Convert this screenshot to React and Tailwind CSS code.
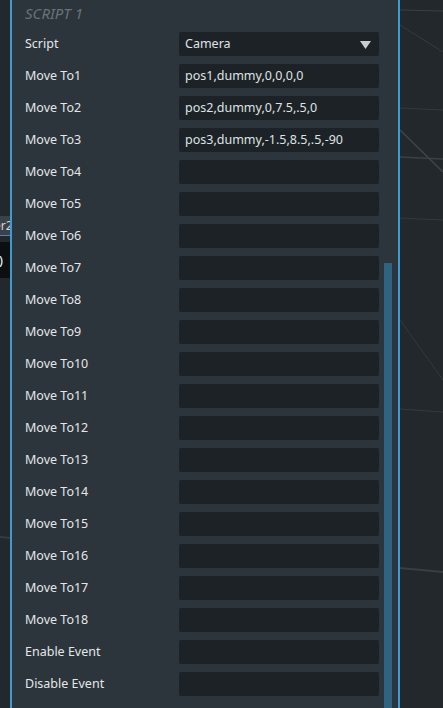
import { useMemo } from 'react'

const rows = [
  ['Move To1', 'pos1,dummy,0,0,0,0'],
  ['Move To2', 'pos2,dummy,0,7.5,.5,0'],
  ['Move To3', 'pos3,dummy,-1.5,8.5,.5,-90'],
  ['Move To4', ''],
  ['Move To5', ''],
  ['Move To6', ''],
  ['Move To7', ''],
  ['Move To8', ''],
  ['Move To9', ''],
  ['Move To10', ''],
  ['Move To11', ''],
  ['Move To12', ''],
  ['Move To13', ''],
  ['Move To14', ''],
  ['Move To15', ''],
  ['Move To16', ''],
  ['Move To17', ''],
  ['Move To18', ''],
  ['Enable Event', ''],
  ['Disable Event', ''],
]

function Field({ label, children }) {
  return (
    <div className="flex items-center h-6">
      <div className="w-[154px] pt-px text-[12.5px] text-[#e4e7e9]">{label}</div>
      <div className="w-[200px] h-6 rounded-[2px] bg-[#1d2226] flex items-center px-[6px] pt-px text-[12.5px] text-[#dfe2e4]">
        {children}
      </div>
    </div>
  )
}

export default function App() {
  const fields = useMemo(() => rows, [])

  return (
    <div
      className="relative w-[443px] h-[708px] overflow-hidden bg-[#23282c] flex"
      style={{ fontFamily: '"Noto Sans", "Open Sans", sans-serif' }}
    >
      {/* backdrop scene lines */}
      <svg className="absolute inset-0" width="443" height="708">
        <line x1="400" y1="10" x2="443" y2="11" stroke="#3a4045" strokeWidth="1" />
        <line x1="400" y1="25" x2="443" y2="52" stroke="#363c41" strokeWidth="1" />
        <line x1="400" y1="108" x2="443" y2="110" stroke="#343a3f" strokeWidth="1" />
        <line x1="400" y1="130" x2="443" y2="172" stroke="#3f454a" strokeWidth="1.5" />
        <line x1="400" y1="157" x2="443" y2="159" stroke="#3b4146" strokeWidth="1.5" />
        <line x1="400" y1="218" x2="443" y2="220" stroke="#33393e" strokeWidth="1" />
        <line x1="400" y1="320" x2="443" y2="380" stroke="#33393e" strokeWidth="1" />
        <line x1="400" y1="409" x2="443" y2="412" stroke="#353b40" strokeWidth="1" />
        <line x1="400" y1="568" x2="443" y2="572" stroke="#383e43" strokeWidth="2" />
        <line x1="0" y1="537" x2="10" y2="538" stroke="#353b40" strokeWidth="2" />
      </svg>

      {/* left sliver of the scene behind the panel */}
      <div className="relative w-[10px] shrink-0 flex flex-col">
        <div className="h-[216px]" />
        <div className="h-[20px] bg-[#3a4248] border-b border-[#5a7fa8] text-[12px] leading-[20px] text-[#d6d9db] overflow-hidden whitespace-nowrap">
          <span className="-ml-[6px] inline-block">er2</span>
        </div>
        <div className="h-[6px]" />
        <div className="h-[36px] bg-[#0c0e10] text-[13px] leading-[36px] text-white overflow-hidden">
          <span className="-ml-[1px] inline-block">)</span>
        </div>
      </div>

      {/* script panel */}
      <div className="relative w-[390px] shrink-0 bg-[#2c353b] border-x-2 border-[#3a9bd5]">
        <div className="pl-[13px] pt-[2px] flex flex-col">
          <div className="h-[22px] flex items-center text-[15px] italic text-[#697278]">
            SCRIPT 1
          </div>
          <div className="flex flex-col gap-2 mt-[8px]">
            <Field label="Script">
              <span className="flex-1">Camera</span>
              <svg width="11" height="8" viewBox="0 0 11 8" className="mr-[2px]">
                <path d="M0 0 H11 L5.5 8 Z" fill="#c9cdd0" />
              </svg>
            </Field>
            {fields.map(([label, value]) => (
              <Field key={label} label={label}>
                {value}
              </Field>
            ))}
          </div>
        </div>
        <div className="absolute left-[372px] top-[263px] w-[8px] h-[460px] bg-[#2e6382]" />
      </div>

      <div className="flex-1" />
    </div>
  )
}
